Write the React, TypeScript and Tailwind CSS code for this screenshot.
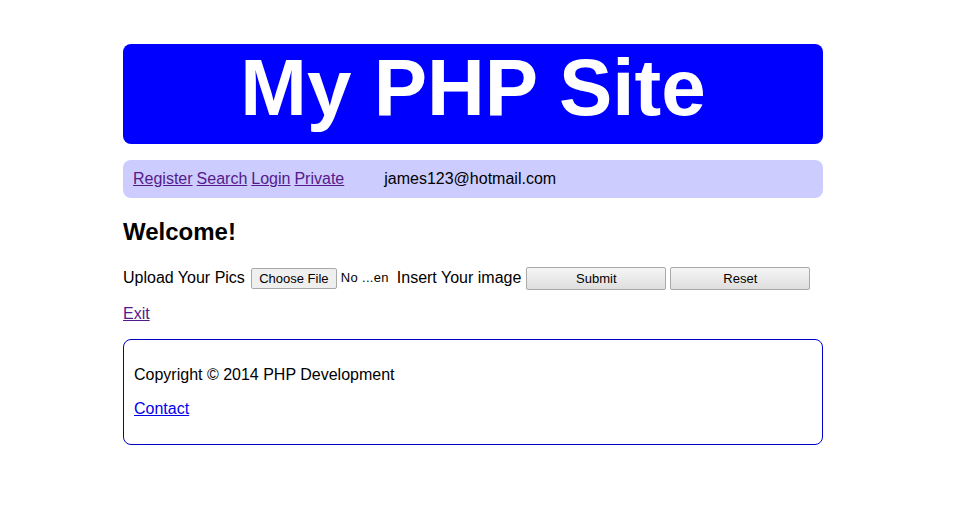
import React from "react";

const navLinks = ["Register", "Search", "Login", "Private"];

export default function App() {
  return (
    <div className="min-h-[511px] bg-white font-['Liberation_Sans',Arial,sans-serif] text-black">
      <div className="ml-[123px] w-[700px] pt-[44px]">
        {/* Header banner */}
        <div className="h-[100px] rounded-[8px] bg-[#0000ff] flex items-center justify-center">
          <h1 className="text-[80px] leading-none font-bold text-white mt-[-12px]">My PHP Site</h1>
        </div>

        {/* Nav bar */}
        <div className="mt-[16px] h-[38px] rounded-[8px] bg-[#ccccff] flex items-center pl-[10px] text-[16px]">
          <div className="flex gap-[4px]">
            {navLinks.map((l) => (
              <a key={l} href="#" className="text-[#551a8b] underline">
                {l}
              </a>
            ))}
          </div>
          <span className="ml-[40px]">james123@hotmail.com</span>
        </div>

        {/* Welcome */}
        <h2 className="mt-[21px] text-[24px] font-bold leading-[26px]">Welcome!</h2>

        {/* Upload form */}
        <form className="mt-[21px] flex items-center text-[16px] h-[24px]" onSubmit={(e) => e.preventDefault()}>
          <span>Upload Your Pics</span>
          <button
            type="button"
            className="ml-[6px] h-[21px] w-[86px] border border-[#a9a9a9] rounded-[2px] bg-[#efefef] text-[13px] leading-none"
          >
            Choose File
          </button>
          <span className="ml-[4px] text-[13px] tracking-[0.3px]">No ...en</span>
          <span className="ml-[8px]">Insert Your image</span>
          <button
            type="submit"
            className="ml-[5px] h-[23px] w-[140px] border border-[#a9a9a9] rounded-[2px] bg-gradient-to-b from-[#f6f6f6] to-[#dedede] text-[13px] leading-none"
          >
            Submit
          </button>
          <button
            type="reset"
            className="ml-[4px] h-[23px] w-[140px] border border-[#a9a9a9] rounded-[2px] bg-gradient-to-b from-[#f6f6f6] to-[#dedede] text-[13px] leading-none"
          >
            Reset
          </button>
        </form>

        {/* Exit */}
        <div className="mt-[15px] text-[16px] leading-[18px]">
          <a href="#" className="text-[#551a8b] underline">Exit</a>
        </div>

        {/* Footer */}
        <div className="mt-[16px] h-[106px] rounded-[8px] border border-[#0000cc] px-[10px] pt-[26px] text-[16px] leading-[18px]">
          <p>Copyright © 2014 PHP Development</p>
          <p className="mt-[16px]">
            <a href="#" className="text-[#0000ee] underline">Contact</a>
          </p>
        </div>
      </div>
    </div>
  );
}
